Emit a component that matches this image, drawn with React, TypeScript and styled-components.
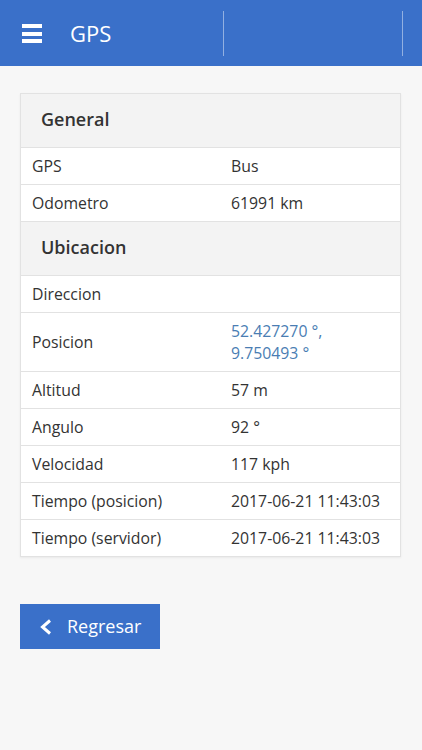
import React from "react";
import styled, { createGlobalStyle } from "styled-components";

const Global = createGlobalStyle`
  html, body { margin: 0; padding: 0; background: #f7f7f7; }
  body { font-family: "Open Sans", "Noto Sans", sans-serif; color: #333; }
  * { box-sizing: border-box; }
`;

const Page = styled.div`
  min-height: 750px;
  background: #f7f7f7;
`;

const Header = styled.header`
  height: 66px;
  background: #3a70c9;
  display: grid;
  grid-template-columns: 223px 1px 178px 1px 1fr;
  align-items: center;
`;

const Brand = styled.div`
  display: flex;
  align-items: center;
  padding-left: 22px;
  gap: 28px;
`;

const Burger = styled.div`
  width: 20px;
  display: flex;
  flex-direction: column;
  gap: 3.5px;
  margin-top: 1px;
  span {
    display: block;
    height: 4px;
    background: #fff;
  }
`;

const Title = styled.h1`
  margin: 0;
  font-size: 22px;
  font-weight: 400;
  color: #fff;
  line-height: 1;
  margin-top: -1px;
`;

const Divider = styled.div`
  width: 1px;
  height: 45px;
  background: rgba(255, 255, 255, 0.45);
`;

const Content = styled.main`
  padding: 27px 21px 0 20px;
`;

const Card = styled.section`
  background: #fff;
  border: 1px solid #e2e2e2;
  box-shadow: 0 1px 2px rgba(0, 0, 0, 0.06);
`;

const SectionHead = styled.div`
  height: 54px;
  background: #f3f3f3;
  display: flex;
  align-items: center;
  padding: 0 0 3px 20px;
  font-size: 18px;
  font-weight: 600;
  color: #333;
  border-bottom: 1px solid #e2e2e2;
`;

const Row = styled.div<{ $divider?: boolean }>`
  display: grid;
  grid-template-columns: 199px 1fr;
  border-bottom: ${(p) => (p.$divider ? "1px solid #e2e2e2" : "none")};
`;

const Cell = styled.div<{ $link?: boolean }>`
  padding: 7px 11px;
  font-size: 15.8px;
  line-height: 22px;
  min-height: 36px;
  color: ${(p) => (p.$link ? "#4a7db3" : "#333")};
  display: flex;
  align-items: center;
`;

const BackButton = styled.button`
  margin-top: 47px;
  width: 140px;
  height: 45px;
  background: #3a70c9;
  border: none;
  color: #fff;
  display: flex;
  align-items: center;
  padding: 0 0 0 20px;
  gap: 15px;
  font-family: "Open Sans", sans-serif;
  font-size: 18px;
  cursor: pointer;
  span { margin-top: -2px; }
`;

type Item = { label: string; value: React.ReactNode; link?: boolean };

const general: Item[] = [
  { label: "GPS", value: "Bus" },
  { label: "Odometro", value: "61991 km" },
];

const ubicacion: Item[] = [
  { label: "Direccion", value: "" },
  {
    label: "Posicion",
    value: (
      <>
        52.427270 °,
        <br />
        9.750493 °
      </>
    ),
    link: true,
  },
  { label: "Altitud", value: "57 m" },
  { label: "Angulo", value: "92 °" },
  { label: "Velocidad", value: "117 kph" },
  { label: "Tiempo (posicion)", value: "2017-06-21 11:43:03" },
  { label: "Tiempo (servidor)", value: "2017-06-21 11:43:03" },
];

const Rows = ({ items, last }: { items: Item[]; last?: boolean }) => (
  <>
    {items.map((it, i) => (
      <Row key={it.label} $divider={!(last && i === items.length - 1)}>
        <Cell>{it.label}</Cell>
        <Cell $link={it.link}>
          <div>{it.value}</div>
        </Cell>
      </Row>
    ))}
  </>
);

export default function App() {
  return (
    <Page>
      <Global />
      <Header>
        <Brand>
          <Burger>
            <span />
            <span />
            <span />
          </Burger>
          <Title>GPS</Title>
        </Brand>
        <Divider />
        <div />
        <Divider />
        <div />
      </Header>
      <Content>
        <Card>
          <SectionHead>General</SectionHead>
          <Rows items={general} />
          <SectionHead>Ubicacion</SectionHead>
          <Rows items={ubicacion} last />
        </Card>
        <BackButton>
          <svg width="12" height="16" viewBox="0 0 12 16">
            <polyline points="10,1.5 2.5,8 10,14.5" fill="none" stroke="#fff" strokeWidth="3" />
          </svg>
          <span>Regresar</span>
        </BackButton>
      </Content>
    </Page>
  );
}
